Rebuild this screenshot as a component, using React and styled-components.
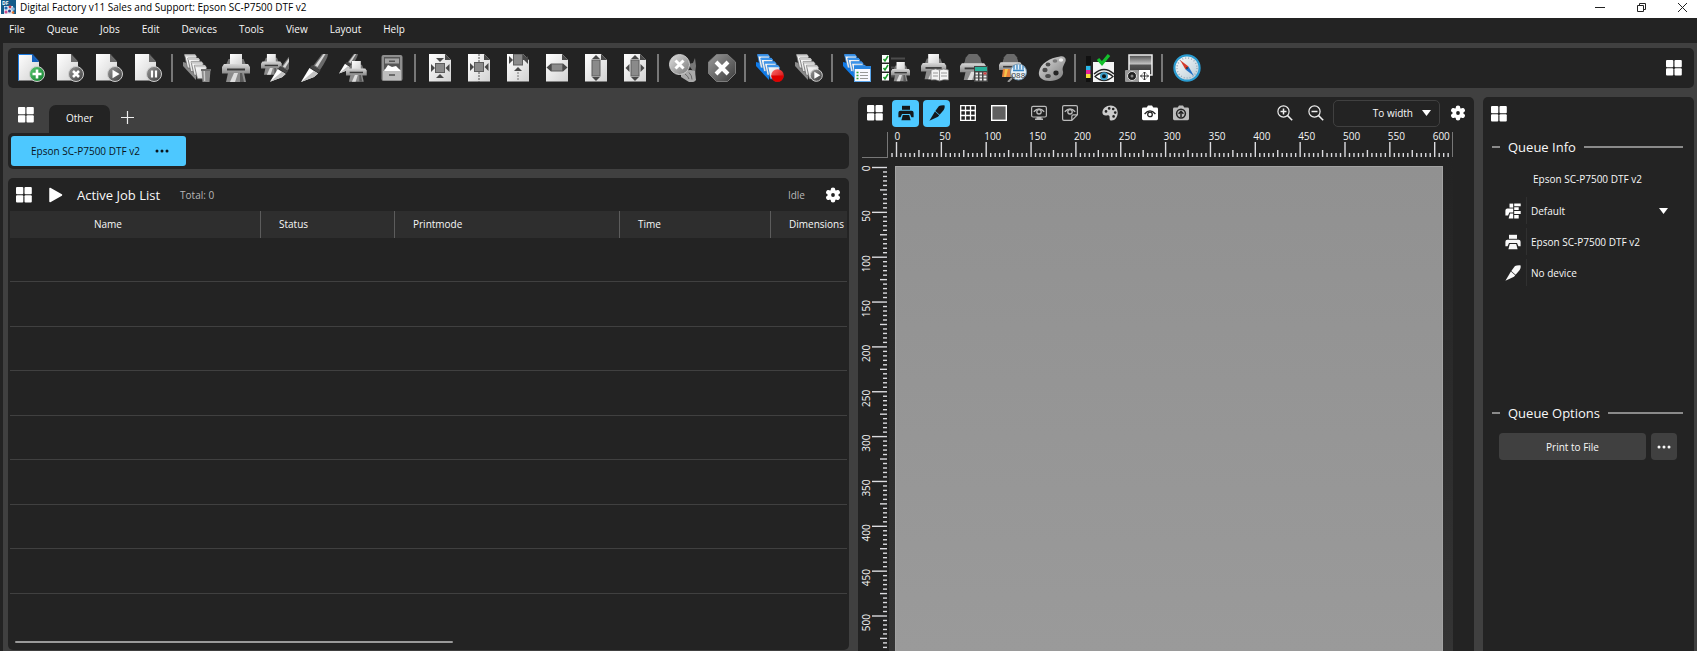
import React from 'react';
import styled, { createGlobalStyle } from 'styled-components';

const GlobalStyle = createGlobalStyle`
  * {
    box-sizing: border-box;
  }

  body {
    margin: 0;
    background: #404040;
    color: #f8f8f8;
    font-family: "Open Sans", "Noto Sans", sans-serif;
    font-size: 10px;
    line-height: 16px;
  }

  button, select {
    font: inherit;
    color: inherit;
    border: none;
    padding: 0;
    background: none;
  }

  svg {
    display: block;
    flex: none;
  }
`;

const Window = styled.div`
  display: flex;
  flex-direction: column;
  height: 100vh;
  min-height: 400px;
  overflow: hidden;
`;

const TitleBar = styled.header`
  display: flex;
  align-items: center;
  gap: 4px;
  height: 18px;
  padding: 0 9px 4px 1px;
  background: #fff;
  color: #000;
`;

const Title = styled.h1`
  margin: 0;
  flex: 1;
  font-size: 10px;
  font-weight: 400;
  line-height: 16px;
`;

const WindowButtons = styled.div`
  display: flex;
  gap: 29px;
`;

const MenuBar = styled.nav`
  display: flex;
  gap: 22px;
  height: 25px;
  padding: 0 9px 3px;
  background: #232323;
`;

const MenuItem = styled.button`
  white-space: nowrap;
`;

const Body = styled.main`
  flex: 1;
  min-height: 0;
  display: flex;
  flex-direction: column;
  gap: 9px;
  padding: 5px 3px 0 5px;
  border-left: 3px solid #232323;
  background: #404040;
`;

const Toolbar = styled.div`
  display: flex;
  align-items: center;
  height: 40px;
  padding: 0 12px 0 4px;
  border-radius: 5px;
  background: #232323;
`;

const Tool = styled.button`
  display: flex;
  justify-content: center;
  width: 39px;
`;

const Separator = styled.span`
  width: 2px;
  height: 28px;
  margin: 0 4px 0 3px;
  background: #777;
`;

const Spacer = styled.span`
  flex: 1;
`;

const Columns = styled.div`
  flex: 1;
  min-height: 0;
  display: grid;
  grid-template-columns: minmax(0, 841fr) minmax(0, 616fr) 211px;
  gap: 9px;
`;

const Jobs = styled.section`
  display: flex;
  flex-direction: column;
  min-height: 0;
  padding-bottom: 1px;
`;

const Tabs = styled.div`
  display: flex;
  align-items: flex-end;
  height: 36px;
  padding-left: 10px;
`;

const Tab = styled.button`
  height: 28px;
  min-width: 61px;
  margin-left: 15px;
  padding: 0 16px 2px;
  border-radius: 7px 7px 0 0;
  background: #232323;
`;

const TabIcon = styled.button`
  display: flex;
  padding-bottom: ${p => p.$bottom}px;
  padding-left: ${p => p.$left || 0}px;
`;

const QueueBar = styled.div`
  display: flex;
  height: 36px;
  padding: 3px;
  border-radius: 5px;
  background: #232323;
`;

const QueueButton = styled.button`
  display: flex;
  align-items: center;
  gap: 15px;
  height: 30px;
  padding: 0 17px 0 20px;
  border-radius: 3px;
  background: #4dc8ff;
  color: #0a141a;
`;

const JobPanel = styled.div`
  flex: 1;
  min-height: 0;
  display: flex;
  flex-direction: column;
  margin-top: 9px;
  padding: 0 2px 7px;
  border-radius: 5px;
  background: #232323;
`;

const JobHeader = styled.div`
  display: flex;
  align-items: center;
  height: 33px;
  padding: 0 6px;
`;

const IconButton = styled.button`
  display: flex;
  align-items: center;
  justify-content: center;
  color: #fff;
`;

const SettingsButton = styled(IconButton)`
  margin-left: 20px;
`;

const Heading = styled.h2`
  margin: 0;
  font-size: 13px;
  font-weight: 400;
  line-height: 20px;
`;

const JobTitle = styled(Heading)`
  margin: 0 20px 0 14px;
`;

const Muted = styled.span`
  color: #b8b8b8;
`;

const TableWrap = styled.div`
  flex: 1;
  min-height: 0;
  overflow: hidden;
`;

const JobTable = styled.table`
  width: 100%;
  table-layout: fixed;
  border-collapse: separate;
  border-spacing: 0;

  th {
    height: 27px;
    padding: 0 0 2px 18px;
    background: #2e2e2e;
    border-left: 1px solid #5c5c5c;
    font-weight: 400;
    text-align: left;
    white-space: nowrap;
  }

  th:first-child {
    padding-left: 84px;
    border-left: none;
  }

  td {
    height: 44px;
    padding: 0;
    border-bottom: 1px solid #404040;
  }

  tr:nth-child(even) td {
    height: 45px;
  }
`;

const Col = styled.col`
  width: ${p => p.$width};
`;

const ScrollTrack = styled.div`
  padding: 0 5px;
`;

const ScrollThumb = styled.div`
  width: 53%;
  height: 2px;
  border-radius: 1px;
  background: #999;
`;

const Preview = styled.section`
  display: flex;
  flex-direction: column;
  min-height: 0;
  border-radius: 5px 5px 0 0;
  background: #232323;
`;

const PreviewBar = styled.div`
  display: flex;
  align-items: center;
  gap: 4px;
  height: 32px;
  padding: 0 3px;
`;

const PreviewTool = styled.button`
  display: flex;
  align-items: center;
  justify-content: center;
  width: 27px;
  height: 27px;
  border-radius: 4px;
  background: ${p => (p.$active ? '#4dc8ff' : 'none')};
  color: ${p => (p.$active ? '#14181b' : p.$dim ? '#bbb' : '#fff')};
`;

const Gap = styled.span`
  width: 5px;
`;

const SelectBox = styled.label`
  display: grid;
  align-items: center;
  height: 27px;
  border: ${p => (p.$framed ? '1px solid #404040' : 'none')};
  border-radius: 5px;
  width: ${p => (p.$framed ? '107px' : 'auto')};
  flex: ${p => (p.$framed ? 'none' : '1')};

  > * {
    grid-area: 1 / 1;
  }

  select {
    appearance: none;
    width: 100%;
    padding-right: 26px;
    text-align-last: ${p => (p.$framed ? 'right' : 'left')};
  }

  svg {
    justify-self: end;
    margin-right: 8px;
    pointer-events: none;
  }
`;

const Rulers = styled.div`
  flex: 1;
  min-height: 0;
  display: grid;
  grid-template-columns: 31px minmax(0, 1fr) 21px;
  grid-template-rows: 29px minmax(0, 1fr);

  text {
    fill: #f4f4f4;
    font-size: 10px;
  }
`;

const Canvas = styled.div`
  padding: 8px 10px 0 6px;
  background: linear-gradient(#232323, #343434);
`;

const Paper = styled.div`
  height: 100%;
  border: 1px solid #a3a3a3;
  border-bottom: none;
  background: linear-gradient(#919191, #9a9a9a);
`;

const Info = styled.aside`
  display: flex;
  flex-direction: column;
  padding: 9px 11px 0 8px;
  border-radius: 5px 5px 0 0;
  background: #232323;
`;

const InfoHead = styled.div`
  display: flex;
`;

const GroupTitle = styled.div`
  display: flex;
  align-items: center;
  gap: 8px;
  height: 20px;
  margin-top: ${p => p.$top}px;
  padding-left: 1px;

  &::before, &::after {
    content: "";
    height: 2px;
    background: #8a8a8a;
  }

  &::before {
    width: 8px;
  }

  &::after {
    flex: 1;
  }
`;

const InfoRows = styled.div`
  display: flex;
  flex-direction: column;
  gap: 4px;
  height: 215px;
  margin: 9px 7px 0 14px;
`;

const InfoName = styled.div`
  padding-left: 28px;
  line-height: 27px;
`;

const InfoRow = styled.div`
  display: flex;
  align-items: center;
  height: 27px;
`;

const InfoIcon = styled.span`
  display: flex;
  align-items: center;
  height: 27px;
  margin-right: 4px;
  padding-right: 5px;
  border-right: 1px solid #303030;
`;

const Options = styled.div`
  display: flex;
  gap: 5px;
  margin: 10px 6px 0 8px;
`;

const OptionButton = styled.button`
  display: flex;
  align-items: center;
  justify-content: center;
  flex: ${p => (p.$small ? '0 0 26px' : '1')};
  height: 27px;
  border-radius: 4px;
  background: #404040;
`;

/* ---------- small flat icons ---------- */

const TilesIcon = () => (
  <svg width="16" height="16" viewBox="0 0 16 16" fill="#fff">
    <rect x="0" y="0" width="7.3" height="7.2" rx="1" />
    <rect x="8.5" y="0" width="7.3" height="7.2" rx="1" />
    <rect x="0" y="8.3" width="7.3" height="7.2" rx="1" />
    <rect x="8.5" y="8.3" width="7.3" height="7.2" rx="1" />
  </svg>
);

const GearIcon = () => (
  <svg width="16" height="16" viewBox="0 0 16 16">
    <g stroke="#fff" strokeWidth="4.6" strokeLinecap="round">
      <path d="M8 2.8v10.4M3.3 5.3l9.4 5.4M12.7 5.3l-9.4 5.4" />
    </g>
    <circle cx="8" cy="8" r="5.3" fill="#fff" />
    <circle cx="8" cy="8" r="1.9" fill="#232323" />
  </svg>
);

const DotsIcon = () => (
  <svg width="14" height="4" viewBox="0 0 14 4" fill="currentColor">
    <circle cx="2" cy="2" r="1.5" />
    <circle cx="7" cy="2" r="1.5" />
    <circle cx="12" cy="2" r="1.5" />
  </svg>
);

const CaretIcon = () => (
  <svg width="9" height="6" viewBox="0 0 9 6" fill="#fff">
    <path d="M0 0h9L4.5 6z" />
  </svg>
);

const PrinterIcon = () => (
  <svg width="16" height="16" viewBox="0 0 16 16" fill="currentColor">
    <path d="M4 .8h8v4H4z" />
    <path d="M2.4 5.8h11.2q2 0 2 2v4.4h-2.2L12 9H4l-1.4 3.2H.4V7.8q0-2 2-2z" />
    <path d="M4.8 10h6.4l1.4 5.2H3.4z" />
  </svg>
);

const KnifeIcon = () => (
  <svg width="16" height="16" viewBox="0 0 16 16" fill="currentColor">
    <path d="M10 1Q12 .2 15.7.4q.2 3-1 4.600L10.600 9.700 6.300 5.900z" />
    <path d="M5.900 6.400l4.300 3.800-1.200 1.600L.4 15.700z" />
  </svg>
);

const EyeLines = () => (
  <g fill="none" stroke="currentColor" strokeWidth="1.3">
    <path d="M2.8 6.8Q8 1 13.2 6.8" />
    <circle cx="8" cy="6.8" r="2.2" />
  </g>
);

const MonitorEyeIcon = () => (
  <svg width="16" height="16" viewBox="0 0 16 16">
    <rect x=".6" y="1.4" width="14.8" height="10.6" rx="1.5" fill="none" stroke="currentColor" strokeWidth="1.2" />
    <EyeLines />
    <path d="M5.5 12h5v1.5h1.5V15H4v-1.500h1.500z" fill="currentColor" />
  </svg>
);

const PageEyeIcon = () => (
  <svg width="16" height="16" viewBox="0 0 16 16">
    <path d="M9.8 15.4H2q-1.400 0-1.400-1.400V2Q.6.6 2 .6h12q1.400 0 1.400 1.400v7.800zM9.8 15.400v-4q0-1.600 1.600-1.600h4" fill="none" stroke="currentColor" strokeWidth="1.2" />
    <EyeLines />
  </svg>
);

const PaletteIcon = () => (
  <svg width="16" height="16" viewBox="0 0 16 16">
    <path d="M8.5.4C12.8.4 15.7 3.4 15.7 7.6c0 4.500-2.700 8-6 8-1.700 0-2.300-1-2.100-2.600.2-2-.5-3-2-2.700C3 10.900.4 10.500.4 7.600.4 3.400 4.200.4 8.500.4z" fill="#ccc" />
    <g fill="#232323">
      <circle cx="4" cy="6.4" r="1.3" />
      <circle cx="7.2" cy="3.4" r="1.3" />
      <circle cx="11.2" cy="4" r="1.3" />
      <circle cx="13.2" cy="7.6" r="1.3" />
      <circle cx="11.6" cy="11.4" r="1.3" />
    </g>
  </svg>
);

const CameraIcon = ({ upload }) => (
  <svg width="16" height="16" viewBox="0 0 16 16">
    <path d="M1.4 2.6h3.300L6 .6h4l1.300 2h3.300q1.400 0 1.400 1.400v9.800q0 1.400-1.400 1.400H1.400Q0 15.200 0 13.800V4q0-1.400 1.400-1.400z" fill="currentColor" />
    {upload ? (
      <g fill="none" stroke="#232323" strokeWidth="1.5">
        <circle cx="8" cy="8.6" r="4.4" />
        <path d="M8 12V6.600M5.600 8.800L8 6.400l2.400 2.400" />
      </g>
    ) : (
      <g fill="none" stroke="#232323" strokeWidth="1.3">
        <path d="M2.600 9Q8 2.600 13.400 9" />
        <circle cx="8" cy="9.4" r="2.3" />
      </g>
    )}
  </svg>
);

const GridIcon = () => (
  <svg width="16" height="16" viewBox="0 0 16 16">
    <path d="M.7.7h14.600v14.600H.7zM5.500 0v16M10.500 0v16M0 5.500h16M0 10.500h16" fill="none" stroke="#fff" strokeWidth="1.3" />
  </svg>
);

const SquareIcon = () => (
  <svg width="16" height="16" viewBox="0 0 16 16">
    <rect x=".7" y=".7" width="14.6" height="14.6" fill="#606060" stroke="#fff" strokeWidth="1.4" />
  </svg>
);

const ZoomIcon = ({ plus }) => (
  <svg width="16" height="16" viewBox="0 0 16 16" fill="none" stroke="#eee" strokeWidth="1.2">
    <circle cx="6.5" cy="6.5" r="5.6" />
    <path d="M10.600 10.600l4.600 4.600" strokeWidth="1.5" />
    <path d={plus ? 'M3.500 6.500h6M6.500 3.500v6' : 'M3.500 6.500h6'} strokeWidth="1.5" />
  </svg>
);

const PrintModeIcon = () => (
  <svg width="16" height="16" viewBox="0 0 16 16" fill="#fff">
    <path d="M4.500.6h3.700v4H4.500z" />
    <path d="M2.400 5.400h5.800v4.200H4.300l-1.200 3H.4V7.400q0-2 2-2z" />
    <path d="M5 10.600h3.200v4.800H3.600z" />
    <path d="M9.200.6h6.500v2.600H9.200zM9.200 4.200h4.500v2.800H9.200zM9.200 8h6.500v3H9.200zM9.200 12h4.500v3.400H9.200z" />
  </svg>
);

const AppLogo = () => (
  <svg width="15" height="14" viewBox="0 0 15 14">
    <rect width="15" height="14" fill="#155c8a" />
    <text x="1" y="5" fontSize="5" fontWeight="700" fill="#fff">DF</text>
    <path d="M3 6h9v8H3z" fill="#dfe9f2" />
    <circle cx="5" cy="8" r="1.6" fill="#2269b8" />
    <circle cx="9" cy="7" r="1.4" fill="#c63b4e" />
    <circle cx="12" cy="9" r="1.8" fill="#8fb7dc" />
    <circle cx="5" cy="12" r="1.5" fill="#d14d8b" />
    <circle cx="8.5" cy="11" r="1.5" fill="#2a3c8f" />
    <circle cx="12" cy="12.5" r="1.3" fill="#e8742c" />
  </svg>
);

/* ---------- toolbar artwork, drawn on a 28 x 28 grid ---------- */

const Defs = styled.svg`
  position: absolute;
  width: 0;
  height: 0;
`;

const Gradient = ({ id, from, to, flat }) => (
  <linearGradient id={id} x1="0" y1="0" x2={flat ? 0 : 1} y2="1">
    <stop offset="0" stopColor={from} />
    <stop offset="1" stopColor={to} />
  </linearGradient>
);

const Gradients = () => (
  <Defs aria-hidden="true">
    <defs>
      <Gradient id="sheet" from="#ffffff" to="#d2d2d2" />
      <Gradient id="metal" from="#e0e0e0" to="#787878" />
      <Gradient id="shell" from="#d8d8d8" to="#8a8a8a" flat />
      <Gradient id="dark" from="#9a9a9a" to="#3c3c3c" />
      <Gradient id="green" from="#5ecb74" to="#0d7a2a" />
      <Gradient id="red" from="#ff6a6a" to="#c80000" />
      <Gradient id="dial" from="#ffffff" to="#b5c9d4" />
      <linearGradient id="sky" x1="0" y1="0" x2="0" y2="1">
        <stop offset="0" stopColor="#4a4a4a" />
        <stop offset=".45" stopColor="#c4c4c4" />
        <stop offset=".5" stopColor="#555" />
        <stop offset="1" stopColor="#333" />
      </linearGradient>
    </defs>
  </Defs>
);

const Art = ({ children }) => (
  <svg width="28" height="28" viewBox="0 0 28 28">{children}</svg>
);

const Sheet = ({ blue }) => (
  <>
    <path d="M0 0h14l7 8v18.500H0z" fill="url(#sheet)" />
    {blue && <path d="M0 0h14v1H1v25.500H0z" fill="#1c7be0" />}
    <path d="M14 0l7 8h-7z" fill={blue ? '#1260bd' : '#6b6b6b'} />
    <path d="M14 0h1l6 7v1z" fill={blue ? '#0d4f9f' : '#444'} />
  </>
);

const Badge = ({ fill, x = 19, y = 20, r = 7.5, children }) => (
  <g transform={`translate(${x} ${y})`}>
    <circle r={r} fill={`url(#${fill})`} stroke="#cfcfcf" strokeWidth="1" />
    {children}
  </g>
);

const PlusMark = () => <path d="M0-4.500v9M-4.500 0h9" stroke="#fff" strokeWidth="2.6" />;
const CrossMark = () => <path d="M-3-3L3 3M3-3L-3 3" stroke="#fff" strokeWidth="2.6" />;
const PlayMark = () => <path d="M-2.500-4.300L4.600 0l-7.100 4.300z" fill="#fff" />;
const PauseMark = () => <path d="M-2-3.500v7M2-3.500v7" stroke="#fff" strokeWidth="2.2" />;

const Stack = ({ blue }) => (
  <g>
    <path d="M0 8l4 1 9 13v4L0 12z" fill={blue ? '#0f7bea' : '#8a8a8a'} />
    {[0, 1, 2, 3].map(i => (
      <g key={i} transform={`translate(${1.5 + i * 3.3} ${0.5 + i * 3.6})`}>
        <path d="M0 0h10.500l1.500 2v11.500H3z" fill="url(#sheet)" stroke={blue ? '#1a76d6' : '#6a6a6a'} strokeWidth=".8" />
        <path d="M0 0h10.500l1.500 2H.6z" fill={blue ? '#3a93ea' : '#c9c9c9'} />
      </g>
    ))}
  </g>
);

const BigPrinter = ({ x = 0, y = 0, s = 1, noPaper }) => (
  <g transform={`translate(${x} ${y}) scale(${s})`}>
    <path d="M4 11L6.500 5h15l2.500 6z" fill="#777" />
    {noPaper
      ? <path d="M6 4l3.500-4h9L22 4l1 6H5z" fill="#6a6a6a" />
      : <path d="M8 0h12v11H8z" fill="url(#sheet)" />}
    <path d="M2 10h24l2 3v6.500H0V13z" fill="url(#shell)" />
    <path d="M5 14.500h18v2H5z" fill="#3a3a3a" />
    <path d="M6 19h16l2 9H4z" fill="#8c8c8c" />
    <path d="M12 19h4l-3 9H8z" fill="#ddd" />
    <path d="M18 19h2l2 9h-4z" fill="#5a5a5a" />
  </g>
);

const BigKnife = ({ x = 0, y = 0, s = 1 }) => (
  <g transform={`translate(${x} ${y}) scale(${s})`}>
    <path d="M12 12L21 0h6q0 4-8 16z" fill="#6a6a6a" />
    <path d="M14 11.500L22.500 0h2l-8 13z" fill="#d8d8d8" />
    <path d="M11 11l8.500 5.500-2 2.500-8.500-5.500z" fill="#454545" />
    <path d="M8.500 14l8.500 5.500L13 23 0 28z" fill="#fff" />
    <path d="M13 17l4 2.500L13 23 0 28z" fill="#c2c2c2" />
  </g>
);

const Frame = ({ children }) => (
  <Art>
    <path d="M3 0h16l6 6v21.500H3z" fill="url(#sheet)" />
    <path d="M19 0l6 6h-6z" fill="#4a4a4a" />
    {children}
  </Art>
);

const Block = props => <rect fill="#8a8a8a" stroke="#5c5c5c" strokeWidth="1" {...props} />;
const Arrows = ({ d }) => <path d={d} fill="#484848" />;

const NewJob = () => <Art><Sheet blue /><Badge fill="green"><PlusMark /></Badge></Art>;
const DeleteJob = () => <Art><Sheet /><Badge fill="dark"><CrossMark /></Badge></Art>;
const StartJob = () => <Art><Sheet /><Badge fill="dark"><PlayMark /></Badge></Art>;
const PauseJob = () => <Art><Sheet /><Badge fill="dark"><PauseMark /></Badge></Art>;

const ClearQueue = () => (
  <Art>
    <Stack />
    <path d="M18.500 16h9l-1 12h-7z" fill="#8b8b8b" />
    <path d="M20.500 17h1.500l.3 10h-1.300z" fill="#c9c9c9" />
    <path d="M18 15h10v2H18z" fill="#6c6c6c" />
  </Art>
);

const Print = () => <Art><BigPrinter /></Art>;
const PrintCut = () => <Art><BigPrinter s={0.74} /><BigKnife x={9} y={2} s={0.92} /></Art>;
const Cut = () => <Art><BigKnife x={1} /></Art>;
const CutPrint = () => <Art><BigKnife s={0.7} /><BigPrinter x={7} y={7} s={0.74} /></Art>;

const Archive = () => (
  <Art>
    <rect x="3.5" y="1" width="21" height="26" rx="2" fill="#8e8e8e" />
    <rect x="6" y="3" width="16" height="12" fill="#565656" />
    <rect x="7" y="4.5" width="14" height="5" fill="#a5a5a5" />
    <path d="M11 6.500h6V8h-6z" fill="#555" />
    <path d="M6 17l4-6 4 2 4-1 5 5z" fill="#fff" />
    <rect x="5" y="17" width="18" height="9" fill="#bdbdbd" />
    <path d="M11 20h6v2h-6z" fill="#6a6a6a" />
  </Art>
);

const CenterBoth = () => (
  <Frame>
    <Block x="9.5" y="9.5" width="9" height="9" />
    <Arrows d="M10 4h8l-4 4zM10 24h8l-4-4zM5 10v8l4-4zM23.500 10v8l-4-4z" />
  </Frame>
);
const CenterWidth = () => (
  <Frame>
    <path d="M14 0v28" stroke="#555" strokeDasharray="2 1" />
    <Block x="9.5" y="8.5" width="9" height="9" />
    <Arrows d="M5 9v8l4-4zM23.500 9v8l-4-4z" />
  </Frame>
);
const AlignTop = () => (
  <Frame>
    <path d="M14 18v9" stroke="#777" strokeDasharray="2 1" />
    <Block x="9.5" y="0" width="9" height="11" />
    <Arrows d="M5 2v8l4-4zM24 2v8l-4-4zM10 17h8l-4-4z" />
  </Frame>
);
const FitWidth = () => (
  <Frame>
    <Block x="8.5" y="10" width="11" height="7" />
    <Arrows d="M3.500 13.500l4.500-4v8zM24.500 13.500l-4.500-4v8z" />
  </Frame>
);
const FitHeight = () => (
  <Frame>
    <Block x="10" y="6" width="8" height="16" />
    <Arrows d="M10 5h8l-4-4zM10 23h8l-4 4z" />
  </Frame>
);
const FitPage = () => (
  <Frame>
    <Block x="10" y="6" width="8" height="16" />
    <Arrows d="M10 5h8l-4-4zM10 23h8l-4 4zM4.500 14l4-4v8zM23.500 14l-4-4v8z" />
  </Frame>
);

const AbortAll = () => (
  <Art>
    <path d="M19 10l5-1 2-5 1 8-1 8z" fill="#777" />
    <path d="M12 20q6-6 14-3l1 9q-2 3-7 2l-8-5z" fill="#aaa" />
    <path d="M16 20q3 2 4 5M20 18.500q3 3 3 7" stroke="#666" fill="none" />
    <Badge fill="metal" x={10.5} y={10.5} r={10}><path d="M-4-4L4 4M4-4L-4 4" stroke="#fff" strokeWidth="3" /></Badge>
  </Art>
);

const Abort = () => (
  <Art>
    <path d="M8.500.5h11L27.500 8v11.500L19.500 27.500h-11L.5 19.500V8z" fill="url(#dark)" stroke="#7c7c7c" />
    <path d="M8 8l12 12M20 8L8 20" stroke="#fff" strokeWidth="4" />
  </Art>
);

const RecordQueue = () => (
  <Art>
    <Stack blue />
    <circle cx="21.5" cy="21.5" r="6.3" fill="url(#red)" />
    <path d="M15.200 21.500h12.600q-1 6.300-6.300 6.300t-6.300-6.300z" fill="#d00" />
  </Art>
);
const PlayQueue = () => (
  <Art>
    <Stack />
    <Badge fill="dark" x={21.3} y={21.3} r={6}><path d="M-2-3.500L4 0l-6 3.500z" fill="#fff" /></Badge>
  </Art>
);

const QueueList = () => (
  <Art>
    <Stack blue />
    <rect x="11.5" y="12.5" width="16" height="15" fill="#f8f8ff" stroke="#5aa5ea" />
    <path d="M11 12h17v3H11z" fill="#2a86e0" />
    <path d="M17 18.500h8M17 21.500h8M17 24.500h8" stroke="#999" />
    <path d="M13.500 18.500h2M13.500 21.500h2M13.500 24.500h2" stroke="#2fa33a" strokeWidth="1.5" />
  </Art>
);

const CheckPrint = () => (
  <Art>
    {[1, 10, 19].map(y => (
      <g key={y} transform={`translate(0 ${y})`}>
        <rect width="7" height="7.5" fill="#fff" />
        <path d="M1.500 4l1.500 2L6 1" stroke="#1a9c2a" strokeWidth="1.5" fill="none" />
        <path d="M9 3.500h14" stroke="#4c4c4c" strokeWidth="2" />
      </g>
    ))}
    <BigPrinter x={9} y={8} s={0.69} />
  </Art>
);

const PrintBook = () => (
  <Art>
    <BigPrinter s={0.9} />
    <path d="M10 16q5-2 8.500 0 4-2 9 0v10q-5-1-9 1-4-2-8.500-1z" fill="#f3f3f3" stroke="#777" strokeWidth=".8" />
    <path d="M18.500 16v11M12 19h5M12 22h5M20 19h6M20 22h6" stroke="#999" />
  </Art>
);

const PrintCost = () => (
  <Art>
    <BigPrinter noPaper s={0.93} />
    <rect x="14" y="12" width="14" height="16" fill="#444" />
    <path d="M15 13h12v4H15z" fill="#27b19a" />
    {[18.5, 21.5, 24.5].map(y => (
      <path key={y} d={`M15.500 ${y}h2.500v2h-2.500zM19.500 ${y}h2.500v2h-2.500zM23.500 ${y}h3v2h-3z`} fill="#eee" />
    ))}
    <path d="M23.500 18.500h3v2h-3z" fill="#d43c3c" />
  </Art>
);

const PrintCode = () => (
  <Art>
    <BigPrinter noPaper s={0.82} />
    <path d="M4 15h9l-2 8H3z" fill="#e8823c" />
    <path d="M6 15h3l-2 8H5z" fill="#f6c54a" />
    <path d="M13 24l-4 4" stroke="#999" strokeWidth="2" />
    <circle cx="19.5" cy="18" r="8" fill="#e7f2fa" stroke="#6f93ad" />
    <path d="M15 11.500v4M18 11v4.500M21 11v4.500M24 12v3.500M14 16.500h11" stroke="#3a86c4" strokeWidth="1.3" />
    <text x="12.5" y="24" fontSize="8" fill="#333">088</text>
  </Art>
);

const ColorPalette = () => (
  <Art>
    <path d="M22 2.500c5-1 7 3 5 6-2 4-3 6-2 9 1 5-5 9.500-13 9.500C4 27 0 23 1 18 2 10 12 3.500 22 2.500z" fill="url(#metal)" />
    <g fill="#4a4a4a">
      <ellipse cx="7" cy="16" rx="2.6" ry="2.2" />
      <ellipse cx="10" cy="10.5" rx="2.4" ry="2" />
      <ellipse cx="10" cy="22" rx="2.8" ry="2" />
      <ellipse cx="18" cy="19" rx="2.6" ry="2.4" fill="#232323" />
    </g>
    <ellipse cx="17" cy="7" rx="2.4" ry="1.8" fill="#777" />
    <ellipse cx="23" cy="6" rx="2.2" ry="1.7" fill="#eee" />
  </Art>
);

const ColorCheck = () => (
  <Art>
    <path d="M7 8h21v20H7z" fill="#f4f4f4" />
    <path d="M0 2h5v9H0z" fill="#111" />
    <path d="M0 12h4.500v4H0z" fill="#29b6e8" />
    <path d="M0 16h4.500v4H0z" fill="#e5249a" />
    <path d="M0 20h4.500v4H0z" fill="#f2e13c" />
    <path d="M0 24h4.500v4H0z" fill="#111" />
    <path d="M12 5l4 4.500L23 1" stroke="#14c02c" strokeWidth="3.2" fill="none" />
    <path d="M9 22.500q9-8 18 0-9 8-18 0z" fill="#fff" stroke="#222" strokeWidth="1.2" />
    <circle cx="18" cy="22.3" r="4" fill="#3c9fc9" />
    <circle cx="18" cy="22.3" r="2" fill="#111" />
    <path d="M8 20q10-9 20 0" stroke="#222" strokeWidth="1.5" fill="none" />
  </Art>
);

const SnapMove = () => (
  <Art>
    <rect x="4" y="1" width="23" height="20" fill="url(#sky)" stroke="#eee" strokeWidth="1.5" />
    <rect x="0" y="16" width="14" height="12" rx="1" fill="#999" />
    <circle cx="7" cy="22" r="4.5" fill="#222" stroke="#ddd" />
    <circle cx="7" cy="22" r="1.5" fill="#888" />
    <rect x="14" y="16" width="11" height="12" fill="#fff" />
    <path d="M19.500 18v8M15.500 22h8M18 19.500l1.500-1.500 1.500 1.500M18 24.500l1.500 1.500 1.500-1.500M17 20.500L15.500 22l1.500 1.500M22 20.500l1.500 1.500-1.500 1.500" stroke="#333" fill="none" />
  </Art>
);

const Compass = () => (
  <Art>
    <circle cx="14" cy="14" r="12.6" fill="url(#dial)" stroke="#2a9bd0" strokeWidth="2.2" />
    <circle cx="14" cy="14" r="10" fill="none" stroke="#9ab" strokeWidth="1.5" strokeDasharray="1 2" />
    <path d="M7 6l8.500 6.500-3 3z" fill="#d43a2c" />
    <path d="M21 22l-8.500-6.500 3-3z" fill="#1f6fc4" />
    <circle cx="14" cy="14" r="1" fill="#333" />
  </Art>
);

/* ---------- data ---------- */

const menus = ['File', 'Queue', 'Jobs', 'Edit', 'Devices', 'Tools', 'View', 'Layout', 'Help'];

const toolGroups = [
  [['New job', NewJob], ['Delete job', DeleteJob], ['Start job', StartJob], ['Pause job', PauseJob]],
  [['Clear queue', ClearQueue], ['Print', Print], ['Print and cut', PrintCut], ['Cut', Cut], ['Cut, then print', CutPrint], ['Archive', Archive]],
  [['Center', CenterBoth], ['Center in width', CenterWidth], ['Align top', AlignTop], ['Fit width', FitWidth], ['Fit height', FitHeight], ['Fit page', FitPage]],
  [['Abort all', AbortAll], ['Abort', Abort]],
  [['Record queue', RecordQueue], ['Play queue', PlayQueue]],
  [['Queue list', QueueList], ['Print checks', CheckPrint], ['Print log', PrintBook], ['Print cost', PrintCost], ['Print data', PrintCode], ['Colors', ColorPalette]],
  [['Color check', ColorCheck], ['Snapshot', SnapMove]],
  [['Navigator', Compass]],
];

const columns = [
  { name: 'Name', width: '250px' },
  { name: 'Status', width: '134px' },
  { name: 'Printmode', width: '225px' },
  { name: 'Time', width: '151px' },
  { name: 'Dimensions', width: 'auto' },
];

/* ---------- rulers ---------- */

// pixels per 5 mm
const STEP = 4.485;

const tickSize = i => {
  if (i % 10 === 0) return 15;
  if (i % 5 === 0) return 7;
  return 4;
};

const TopRuler = () => (
  <svg width="100%" height="29">
    {Array.from({ length: 125 }, (_, n) => {
      const i = n - 1;
      const x = 7.5 + i * STEP;
      return (
        <g key={i}>
          <path d={`M${x} 28V${28 - tickSize(i)}`} stroke="#dcdce0" strokeWidth="1.4" />
          {i >= 0 && i % 10 === 0 && <text x={x - 2} y="11">{i * 5}</text>}
        </g>
      );
    })}
    <path d="M563.500 3v25" stroke="#777" />
  </svg>
);

const SideRuler = () => (
  <svg width="31" height="100%">
    {Array.from({ length: 110 }, (_, i) => {
      const y = 9.5 + i * STEP;
      return (
        <g key={i}>
          <path d={`M29 ${y}H${29 - tickSize(i)}`} stroke="#dcdce0" strokeWidth="1.4" />
          {i % 10 === 0 && (
            <text textAnchor="end" transform={`translate(12 ${y - 2}) rotate(-90)`}>{i * 5}</text>
          )}
        </g>
      );
    })}
  </svg>
);

const Corner = () => (
  <svg width="31" height="29">
    <path d="M4 28.500h26" stroke="#777" />
    <path d="M29.500 3v26" stroke="#777" />
  </svg>
);

export default function App() {
  return (
    <>
      <GlobalStyle />
      <Gradients />
      <Window>
        <TitleBar>
          <AppLogo />
          <Title>Digital Factory v11 Sales and Support: Epson SC-P7500 DTF v2</Title>
          <WindowButtons>
            <button aria-label="Minimize">
              <svg width="12" height="12" viewBox="0 0 12 12"><path d="M1 6.500h10" stroke="#222" /></svg>
            </button>
            <button aria-label="Restore">
              <svg width="12" height="12" viewBox="0 0 12 12" fill="none" stroke="#222">
                <path d="M2.500 4.500h6v6h-6zM4.500 4.500v-2h6v6h-2" />
              </svg>
            </button>
            <button aria-label="Close">
              <svg width="12" height="12" viewBox="0 0 12 12"><path d="M2 2l9 9M11 2l-9 9" stroke="#222" /></svg>
            </button>
          </WindowButtons>
        </TitleBar>
        <MenuBar>
          {menus.map(m => <MenuItem key={m}>{m}</MenuItem>)}
        </MenuBar>
        <Body>
          <Toolbar>
            {toolGroups.map((group, g) => (
              <React.Fragment key={g}>
                {g > 0 && <Separator />}
                {group.map(([label, Icon]) => (
                  <Tool key={label} aria-label={label}><Icon /></Tool>
                ))}
              </React.Fragment>
            ))}
            <Spacer />
            <IconButton aria-label="Toolbar layout"><TilesIcon /></IconButton>
          </Toolbar>
          <Columns>
            <Jobs>
              <Tabs>
                <TabIcon $bottom={10} aria-label="Tab layout"><TilesIcon /></TabIcon>
                <Tab>Other</Tab>
                <TabIcon $bottom={9} $left={11} aria-label="Add tab">
                  <svg width="13" height="13" viewBox="0 0 13 13">
                    <path d="M6.500 0v13M0 6.500h13" stroke="#eee" strokeWidth="1.2" />
                  </svg>
                </TabIcon>
              </Tabs>
              <QueueBar>
                <QueueButton>Epson SC-P7500 DTF v2 <DotsIcon /></QueueButton>
              </QueueBar>
              <JobPanel>
                <JobHeader>
                  <IconButton aria-label="Job list layout"><TilesIcon /></IconButton>
                  <Gap />
                  <IconButton aria-label="Start">
                    <svg width="26" height="16" viewBox="0 0 26 16" fill="#fff">
                      <path d="M13 1.500L24.500 8 13 14.500z" stroke="#fff" strokeWidth="1.5" strokeLinejoin="round" />
                    </svg>
                  </IconButton>
                  <JobTitle>Active Job List</JobTitle>
                  <Muted>Total: 0</Muted>
                  <Spacer />
                  <Muted>Idle</Muted>
                  <SettingsButton aria-label="Job list settings"><GearIcon /></SettingsButton>
                </JobHeader>
                <TableWrap>
                  <JobTable>
                    <colgroup>
                      {columns.map(c => <Col key={c.name} $width={c.width} />)}
                    </colgroup>
                    <thead>
                      <tr>
                        {columns.map(c => <th key={c.name}>{c.name}</th>)}
                      </tr>
                    </thead>
                    <tbody>
                      {Array.from({ length: 8 }, (_, i) => (
                        <tr key={i}><td colSpan={columns.length} /></tr>
                      ))}
                    </tbody>
                  </JobTable>
                </TableWrap>
                <ScrollTrack><ScrollThumb /></ScrollTrack>
              </JobPanel>
            </Jobs>
            <Preview>
              <PreviewBar>
                <PreviewTool aria-label="Preview layout"><TilesIcon /></PreviewTool>
                <PreviewTool $active aria-label="Show print"><PrinterIcon /></PreviewTool>
                <PreviewTool $active aria-label="Show cut"><KnifeIcon /></PreviewTool>
                <PreviewTool aria-label="Grid"><GridIcon /></PreviewTool>
                <PreviewTool aria-label="Background"><SquareIcon /></PreviewTool>
                <Gap />
                <PreviewTool $dim aria-label="Screen preview"><MonitorEyeIcon /></PreviewTool>
                <PreviewTool $dim aria-label="Page preview"><PageEyeIcon /></PreviewTool>
                <Gap />
                <PreviewTool aria-label="Palette"><PaletteIcon /></PreviewTool>
                <Gap />
                <PreviewTool aria-label="Snapshot"><CameraIcon /></PreviewTool>
                <PreviewTool $dim aria-label="Upload snapshot"><CameraIcon upload /></PreviewTool>
                <Spacer />
                <PreviewTool aria-label="Zoom in"><ZoomIcon plus /></PreviewTool>
                <PreviewTool aria-label="Zoom out"><ZoomIcon /></PreviewTool>
                <SelectBox $framed>
                  <select aria-label="Zoom" defaultValue="To width">
                    <option>To width</option>
                  </select>
                  <CaretIcon />
                </SelectBox>
                <PreviewTool aria-label="Preview settings"><GearIcon /></PreviewTool>
              </PreviewBar>
              <Rulers>
                <Corner />
                <TopRuler />
                <span />
                <SideRuler />
                <Canvas><Paper /></Canvas>
              </Rulers>
            </Preview>
            <Info>
              <InfoHead>
                <IconButton aria-label="Queue layout"><TilesIcon /></IconButton>
              </InfoHead>
              <GroupTitle $top={15}><Heading>Queue Info</Heading></GroupTitle>
              <InfoRows>
                <InfoName>Epson SC-P7500 DTF v2</InfoName>
                <InfoRow>
                  <InfoIcon><PrintModeIcon /></InfoIcon>
                  <SelectBox>
                    <select aria-label="Print mode" defaultValue="Default">
                      <option>Default</option>
                    </select>
                    <CaretIcon />
                  </SelectBox>
                </InfoRow>
                <InfoRow><InfoIcon><PrinterIcon /></InfoIcon>Epson SC-P7500 DTF v2</InfoRow>
                <InfoRow><InfoIcon><KnifeIcon /></InfoIcon>No device</InfoRow>
              </InfoRows>
              <GroupTitle $top={22}><Heading>Queue Options</Heading></GroupTitle>
              <Options>
                <OptionButton>Print to File</OptionButton>
                <OptionButton $small aria-label="More"><DotsIcon /></OptionButton>
              </Options>
            </Info>
          </Columns>
        </Body>
      </Window>
    </>
  );
}
